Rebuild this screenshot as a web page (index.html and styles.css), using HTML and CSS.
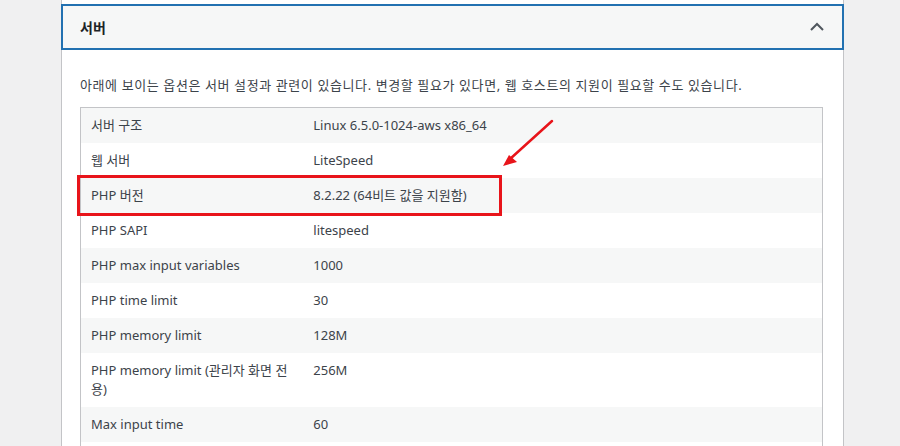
FILE: index.html
```html
<!DOCTYPE html>
<html lang="ko">

<head>
    <meta charset="UTF-8">
    <meta name="viewport" content="width=device-width, initial-scale=1.0">
    <title>사이트 상태 - 서버</title>
    <link rel="stylesheet" href="styles.css">
</head>

<body>
    <div class="panel">
        <button class="panel-head" type="button">
            <span class="panel-title">서버</span>
            <svg class="chevron" width="16" height="10" viewBox="0 0 16 10">
                <path d="M2 8 L8 2 L14 8" fill="none" stroke="#50575e" stroke-width="2"/>
            </svg>
        </button>

        <div class="panel-body">
            <p class="desc">아래에 보이는 옵션은 서버 설정과 관련이 있습니다. 변경할 필요가 있다면, 웹 호스트의 지원이 필요할 수도 있습니다.</p>

            <table class="info-table">
                <tr><td>서버 구조</td><td>Linux 6.5.0-1024-aws x86_64</td></tr>
                <tr><td>웹 서버</td><td>LiteSpeed</td></tr>
                <tr><td>PHP 버전</td><td>8.2.22 (64비트 값을 지원함)</td></tr>
                <tr><td>PHP SAPI</td><td>litespeed</td></tr>
                <tr><td>PHP max input variables</td><td>1000</td></tr>
                <tr><td>PHP time limit</td><td>30</td></tr>
                <tr><td>PHP memory limit</td><td>128M</td></tr>
                <tr><td>PHP memory limit (관리자 화면 전용)</td><td>256M</td></tr>
                <tr><td>Max input time</td><td>60</td></tr>
                <tr><td>&nbsp;</td><td>&nbsp;</td></tr>
            </table>
        </div>

        <!-- annotation over the screenshot -->
        <div class="mark-box"></div>
        <svg class="mark-arrow" width="70" height="60" viewBox="0 0 70 60">
            <line x1="62" y1="2" x2="20" y2="40" stroke="#e8141a" stroke-width="2.5" stroke-linecap="round"/>
            <polygon points="13,47 19,36 27,43" fill="#e8141a"/>
        </svg>
    </div>
</body>

</html>
```

FILE: styles.css
```css
* {
    box-sizing: border-box;
}

body {
    margin: 0;
    height: 446px;
    overflow: hidden;
    background-color: #f0f0f1;
    font-family: "Noto Sans", "Noto Sans CJK KR", sans-serif;
    font-size: 13px;
    color: #3c434a;
}

.panel {
    position: relative;
    margin: 0 56px 0 61px;
    height: 446px;
    background-color: #fff;
    border-left: 1px solid #c3c4c7;
    border-right: 1px solid #c3c4c7;
    padding-top: 4px;
}

.panel-head {
    display: flex;
    align-items: center;
    justify-content: space-between;
    width: calc(100% + 2px);
    height: 46px;
    margin: 0 -1px;
    padding: 0 17px 0 17px;
    background-color: #f6f7f7;
    border: 2px solid #2271b1;
    font-family: inherit;
    color: #1d2327;
    cursor: pointer;
}

.panel-title {
    font-size: 14px;
    font-weight: 600;
}

.panel-body {
    padding: 25px 20px 0 18px;
}

.desc {
    margin: 0 0 12px;
    line-height: 20px;
    letter-spacing: 0.6px;
}

.info-table {
    width: 100%;
    border: 1px solid #c3c4c7;
    border-collapse: separate;
    border-spacing: 0;
}

.info-table td {
    padding: 8px 10px;
    line-height: 19px;
    vertical-align: top;
}

.info-table td:first-child {
    width: 30%;
}

.info-table tr:nth-child(odd) {
    background-color: #f6f7f7;
}

.mark-box {
    position: absolute;
    left: 15px;
    top: 175px;
    width: 425px;
    height: 41px;
    border: 3px solid #e8141a;
}

.mark-arrow {
    position: absolute;
    left: 428px;
    top: 119px;
}
```
